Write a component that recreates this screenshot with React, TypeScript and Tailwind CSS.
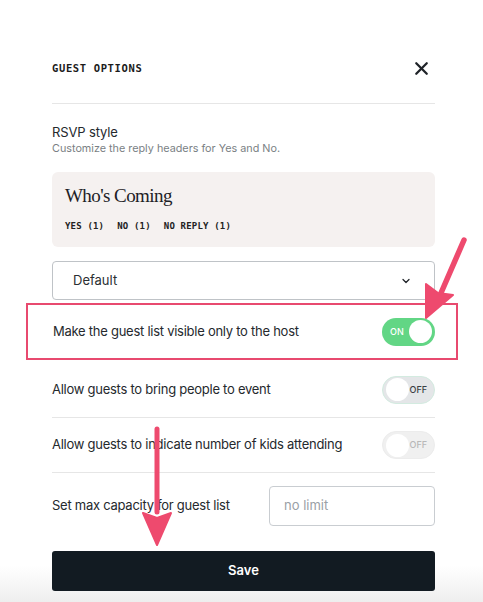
import { X, ChevronDown } from 'lucide-react';

function Toggle({ on, dim }: { on?: boolean; dim?: boolean }) {
  if (on) {
    return (
      <div className="w-[53px] h-[28px] rounded-full bg-[#62d685] flex items-center justify-between pl-[8px] pr-[3px]">
        <span className="text-[9px] font-medium text-white">ON</span>
        <span className="w-[23px] h-[23px] rounded-full bg-white" />
      </div>
    );
  }
  return (
    <div
      className={`w-[53px] h-[28px] rounded-full flex items-center justify-between pl-[3px] pr-[7px] border ${
        dim ? 'bg-[#f0f0f0] border-[#ececec]' : 'bg-[#e4e6e8] border-[#d3ebe0]'
      }`}
    >
      <span className="w-[23px] h-[23px] rounded-full bg-white" />
      <span className={`text-[9px] font-medium ${dim ? 'text-[#b8b8b8]' : 'text-[#3a3f44]'}`}>OFF</span>
    </div>
  );
}

export default function App() {
  return (
    <div
      className="relative w-[483px] h-[602px] overflow-hidden bg-[linear-gradient(to_bottom,#ffffff_94%,#eeeeee)] text-[#1f2328]"
      style={{ fontFamily: 'Inter, "Noto Sans", sans-serif' }}
    >
      <div className="px-[52px] w-full">
        {/* header */}
        <div className="flex items-center justify-between pt-[58px] pb-[24px] border-b border-[#e6e6e6] mr-[-4px]">
          <h2
            className="text-[10.5px] font-bold tracking-[0.06em] text-[#1b1b1b]"
            style={{ fontFamily: '"DejaVu Sans Mono", monospace' }}
          >
            GUEST OPTIONS
          </h2>
          <X className="w-[21px] h-[21px] mr-[3px]" strokeWidth={2.6} />
        </div>

        {/* rsvp style */}
        <div className="pt-[19px] w-[383px]">
          <p className="text-[13px] leading-[18px] text-[#25292d] tracking-[-0.01em]">RSVP style</p>
          <p className="text-[10.8px] leading-[16px] text-[#7a7f84]">Customize the reply headers for Yes and No.</p>

          <div className="mt-[15px] h-[75px] rounded-[6px] bg-[#f5f1f0] px-[13px] pt-[12px]">
            <p className="text-[19px] leading-[24px] text-[#1d2126] tracking-[-0.03em]" style={{ fontFamily: '"Liberation Serif", serif' }}>
              Who's Coming
            </p>
            <div
              className="flex gap-[13px] mt-[12px] text-[9px] font-bold tracking-[0.02em] text-[#222]"
              style={{ fontFamily: '"DejaVu Sans Mono", monospace' }}
            >
              <span>YES (1)</span>
              <span>NO (1)</span>
              <span>NO REPLY (1)</span>
            </div>
          </div>

          <div className="mt-[14px] h-[39px] rounded-[4px] border border-[#bfc3c7] flex items-center justify-between pl-[20px] pr-[22px]">
            <span className="text-[13px] text-[#2b2f33]">Default</span>
            <ChevronDown className="w-[12px] h-[12px]" strokeWidth={2.5} />
          </div>
        </div>
      </div>

      {/* highlighted row */}
      <div className="mx-[26px] mt-[3px] w-[432px] h-[57px] border-2 border-[#e84a6f] flex items-center justify-between pl-[25px] pr-[21px]">
        <span className="text-[13px] tracking-[-0.02em] text-[#25292d]">Make the guest list visible only to the host</span>
        <Toggle on />
      </div>

      <div className="px-[52px]">
        <div className="w-[383px] h-[58px] flex items-center justify-between border-b border-[#e6e6e6] pt-[2px]">
          <span className="text-[13px] tracking-[-0.02em] text-[#25292d]">Allow guests to bring people to event</span>
          <Toggle />
        </div>
        <div className="w-[383px] h-[55px] flex items-center justify-between border-b border-[#e6e6e6]">
          <span className="text-[13px] tracking-[-0.02em] text-[#25292d]">Allow guests to indicate number of kids attending</span>
          <Toggle dim />
        </div>
        <div className="w-[383px] h-[65px] flex items-center justify-between">
          <span className="text-[13px] tracking-[-0.02em] text-[#25292d]">Set max capacity for guest list</span>
          <div className="w-[166px] h-[40px] rounded-[4px] border border-[#c9cdd1] flex items-center pl-[14px] text-[13px] text-[#9aa0a6]">
            no limit
          </div>
        </div>
        <button className="mt-[13px] w-[383px] h-[40px] rounded-[3px] bg-[#121b22] text-white text-[13px] font-semibold">
          Save
        </button>
      </div>

      {/* annotation arrows */}
      <svg className="absolute left-0 top-0 pointer-events-none" width="483" height="602">
        <g fill="#ee4a6e" stroke="#ee4a6e" strokeLinejoin="round">
          <path d="M464 240 L441 293" strokeWidth="5.5" strokeLinecap="round" />
          <path d="M426 318 L426 284 L438 293 L453 295 Z" strokeWidth="2" />
          <path d="M157 429 L157 512" strokeWidth="5" strokeLinecap="round" />
          <path d="M157 545 L143 513 L157 518 L171 513 Z" strokeWidth="2" />
        </g>
      </svg>
    </div>
  );
}
